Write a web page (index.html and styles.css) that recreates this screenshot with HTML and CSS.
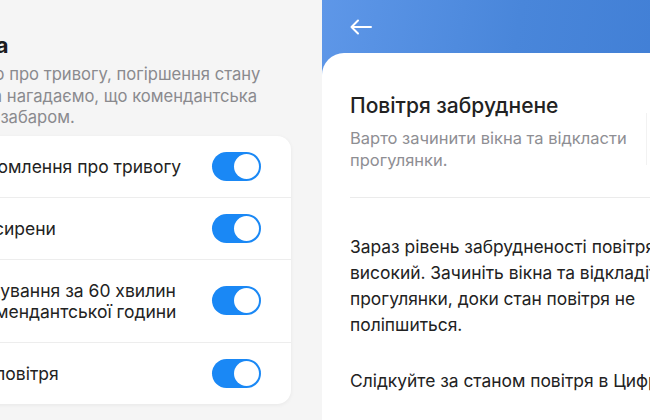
FILE: index.html
```html
<!DOCTYPE html>
<html>
<head>
    <title>Сповіщення та якість повітря</title>
    <meta name="viewport" content="width=device-width" />
    <link rel="stylesheet" href="styles.css">
</head>
<body>

<div class="screens">

    <section class="settings">
        <div class="settings-inner">
            <h2 class="settings-title">Тривога</h2>
            <p class="settings-hint">Розповімо про тривогу, погіршення стану<br>повітря та нагадаємо, що комендантська<br>година незабаром.</p>

            <div class="card">
                <div class="row">
                    <span class="row-label">Повідомлення про тривогу</span>
                    <span class="toggle on"><span class="knob"></span></span>
                </div>
                <div class="row">
                    <span class="row-label">Звук сирени</span>
                    <span class="toggle on"><span class="knob"></span></span>
                </div>
                <div class="row tall">
                    <span class="row-label">Нагадування за 60 хвилин<br>до комендантської години</span>
                    <span class="toggle on"><span class="knob"></span></span>
                </div>
                <div class="row">
                    <span class="row-label">Стан повітря</span>
                    <span class="toggle on"><span class="knob"></span></span>
                </div>
            </div>
        </div>
    </section>

    <section class="detail">
        <div class="detail-bar">
            <svg class="back" width="24" height="16" viewBox="0 0 24 16">
                <path d="M22 8H2.5M9 1.5L2.5 8L9 14.5" fill="none" stroke="#fff" stroke-width="2" stroke-linecap="round" stroke-linejoin="round"/>
            </svg>
        </div>
        <div class="detail-card">
            <div class="detail-head">
                <div>
                    <h1 class="detail-title">Повітря забруднене</h1>
                    <p class="detail-sub">Варто зачинити вікна та відкласти<br>прогулянки.</p>
                </div>
                <div class="detail-pic"></div>
            </div>
            <div class="detail-body">
                <p>Зараз рівень забрудненості повітря високий. Зачиніть вікна та відкладіть прогулянки, доки стан повітря не поліпшиться.</p>
                <p>Слідкуйте за станом повітря в Цифрі.</p>
            </div>
        </div>
    </section>

</div>

</body>
</html>
```

FILE: styles.css
```css
body, html {
    margin: 0;
    font-family: Inter, "Noto Sans", sans-serif;
    color: #1c1c1e;
}

.screens {
    display: flex;
    width: 650px;
    height: 420px;
    overflow: hidden;
}

/* left screen: settings list, cropped on the left */

.settings {
    flex: none;
    width: 322px;
    background: #f5f5f5;
    overflow: hidden;
}

.settings-inner {
    margin-left: -60px;
    width: 351px;
    padding-top: 30px;
}

.settings-title {
    margin: 0 0 0 -21px;
    font-size: 22px;
    font-weight: 700;
    line-height: 30px;
    white-space: nowrap;
}

.settings-hint {
    margin: 4px 0 7px -20px;
    font-size: 16.6px;
    line-height: 21.5px;
    color: #8a8a8e;
    white-space: nowrap;
}

.card {
    background: #fff;
    border-radius: 14px;
    box-shadow: 0 1px 4px rgba(0, 0, 0, 0.06);
    overflow: hidden;
}

.row {
    display: flex;
    align-items: center;
    justify-content: space-between;
    min-height: 61px;
    padding: 0 30px 0 9px;
    border-bottom: 1px solid #ededed;
}

.row:last-child {
    border-bottom: none;
}

.row.tall {
    min-height: 82px;
}

.row-label {
    font-size: 17.5px;
    line-height: 21px;
    color: #222;
    white-space: nowrap;
}

.toggle {
    flex: none;
    display: flex;
    justify-content: flex-start;
    box-sizing: border-box;
    width: 49px;
    height: 29px;
    padding: 2px;
    border-radius: 15px;
    background: #e5e5ea;
}

.toggle.on {
    justify-content: flex-end;
    background: #1a88f5;
}

.knob {
    width: 25px;
    height: 25px;
    border-radius: 50%;
    background: #fff;
}

/* right screen: air quality detail */

.detail {
    flex: 1;
    min-width: 0;
    display: flex;
    flex-direction: column;
    background: linear-gradient(100deg, #5e97e8 0%, #4986da 50%, #3f7dd4 100%);
}

.detail-bar {
    flex: none;
    height: 53px;
    padding-left: 27px;
    display: flex;
    align-items: center;
}

.detail-card {
    flex: 1;
    min-height: 0;
    overflow: hidden;
    background: #fff;
    border-top-left-radius: 22px;
    padding: 40px 0 0 28px;
}

.detail-head {
    display: flex;
    justify-content: space-between;
    padding-bottom: 26px;
    border-bottom: 1px solid #ebebeb;
}

.detail-title {
    margin: 0;
    font-size: 21px;
    font-weight: 500;
    line-height: 26px;
    color: #222;
}

.detail-sub {
    margin: 8px 0 0 0;
    font-size: 16.5px;
    line-height: 22px;
    color: #8e8e93;
}

.detail-pic {
    flex: none;
    width: 3px;
    height: 52px;
    margin-top: 20px;
    border-left: 1px solid #f2f2f2;
}

.detail-body {
    padding-top: 36px;
    width: 374px;
}

.detail-body p {
    margin: 0 0 30px 0;
    font-size: 17.4px;
    line-height: 26px;
    color: #222;
}
```
